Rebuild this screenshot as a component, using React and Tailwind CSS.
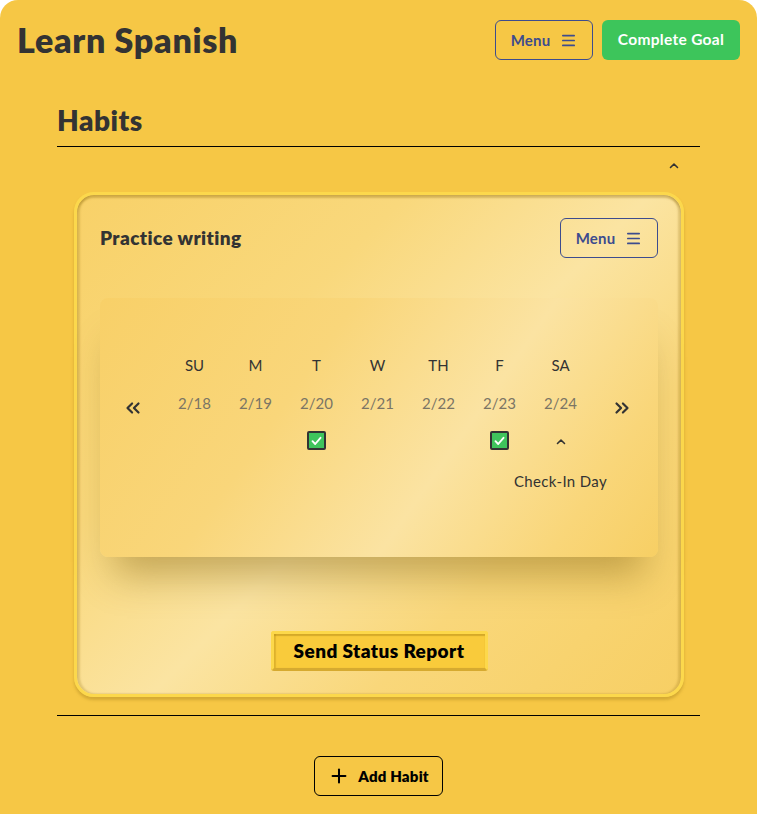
import { ChevronsLeft, ChevronsRight, Menu, Plus } from 'lucide-react';

const DAYS = [
  { label: 'SU', date: '2/18' },
  { label: 'M', date: '2/19' },
  { label: 'T', date: '2/20', done: true },
  { label: 'W', date: '2/21' },
  { label: 'TH', date: '2/22' },
  { label: 'F', date: '2/23', done: true },
  { label: 'SA', date: '2/24', checkIn: true },
];

function Caret({ className = '' }) {
  return (
    <svg width="10" height="7" viewBox="0 0 10 7" className={className}>
      <path d="M1.5 5.5 L5 2 L8.5 5.5" fill="none" stroke="#333" strokeWidth="1.6" strokeLinecap="round" strokeLinejoin="round" />
    </svg>
  );
}

function CheckBox() {
  return (
    <div className="flex h-[19px] w-[19px] items-center justify-center rounded-[2px] border-2 border-[#333] bg-[#3fc45c]">
      <svg width="11" height="10" viewBox="0 0 11 10">
        <path d="M1.5 5.2 L4.2 8 L9.5 1.8" fill="none" stroke="#fff" strokeWidth="1.9" strokeLinecap="round" strokeLinejoin="round" />
      </svg>
    </div>
  );
}

function MenuButton() {
  return (
    <button className="flex h-[40px] w-[98px] items-center justify-center gap-[10px] rounded-[6px] border border-[#3d4c8e] text-[15px] font-bold tracking-[0.2px] text-[#3d4c8e]">
      Menu <Menu size={17} strokeWidth={2.4} />
    </button>
  );
}

export default function App() {
  return (
    <div className="min-h-[814px] bg-white font-['Lato',sans-serif]">
      <div className="min-h-[814px] rounded-t-[18px] bg-[#f6c745] pb-[18px]">
        <header className="flex items-center justify-between pl-[17px] pr-[17px] pt-[20px]">
          <h1 className="text-[34px] font-extrabold leading-none tracking-[0.7px] text-[#333]">Learn Spanish</h1>
          <div className="flex gap-[9px]">
            <MenuButton />
            <button className="h-[40px] w-[138px] rounded-[6px] bg-[#3dc55b] text-[15.5px] font-bold tracking-[0.3px] text-white">Complete Goal</button>
          </div>
        </header>

        <section className="mx-[57px] mt-[43px]">
          <h2 className="border-b border-black pb-[9px] text-[28px] font-extrabold leading-[34px] tracking-[0.5px] text-[#333]">Habits</h2>
          <div className="flex h-[36px] items-center justify-end pr-[21px]">
            <Caret />
          </div>

          <article className="ml-[17px] mr-[16px] mt-[9px] rounded-[20px] border-[3px] border-[#fcd84c] bg-[linear-gradient(135deg,#f8d168_0%,#f9d87c_30%,#fbe4a2_52%,#f9d77a_72%,#f7cf64_100%)] px-[23px] pb-[23px] pt-[23px] shadow-[inset_0_3px_2px_rgba(150,115,20,0.35),inset_3px_0_2px_rgba(150,115,20,0.25),inset_-3px_0_2px_rgba(150,115,20,0.25),0_3px_3px_rgba(150,115,20,0.35)]">
            <div className="flex h-[40px] items-center justify-between">
              <h3 className="text-[19px] font-extrabold tracking-[0.4px] text-[#333]">Practice writing</h3>
              <MenuButton />
            </div>

            <div className="mt-[40px] h-[259px] rounded-[8px] bg-[linear-gradient(125deg,#f8d068_0%,#f9d67a_35%,#fbe3a2_62%,#f9d679_85%,#f7cf64_100%)] pl-[2px] pt-[57px] shadow-[0_32px_36px_-14px_rgba(130,100,20,0.45)]">
              <div className="flex items-start">
                <div className="mt-[43px] flex h-[20px] w-[62px] items-center justify-center text-[#333]">
                  <ChevronsLeft size={22} strokeWidth={2.4} />
                </div>
                {DAYS.map((day) => (
                  <div key={day.label} className="flex w-[61px] flex-col items-center">
                    <span className="h-[20px] text-[15px] leading-[20px] text-[#333]">{day.label}</span>
                    <span className="mt-[18px] h-[20px] text-[15px] leading-[20px] text-[#7b7565]">{day.date}</span>
                    <div className="mt-[18px] flex h-[19px] items-center justify-center">
                      {day.done && <CheckBox />}
                      {day.checkIn && <Caret className="mt-[2px]" />}
                    </div>
                    {day.checkIn && (
                      <span className="mt-[21px] whitespace-nowrap text-[15px] leading-[20px] tracking-[0.35px] text-[#333]">Check-In Day</span>
                    )}
                  </div>
                ))}
                <div className="mt-[43px] flex h-[20px] w-[62px] items-center justify-center text-[#333]">
                  <ChevronsRight size={22} strokeWidth={2.4} />
                </div>
              </div>
            </div>

            <div className="mt-[74px] flex justify-center">
              <button className="h-[40px] w-[217px] rounded-[3px] border-[3px] border-[#fdd84a] border-b-[#d6aa30] bg-[#f9cb3b] text-[19px] font-extrabold tracking-[0.4px] text-black shadow-[inset_0_2px_1px_rgba(170,130,20,0.45),inset_2px_0_1px_rgba(170,130,20,0.3)]">
                Send Status Report
              </button>
            </div>
          </article>

          <div className="mt-[18px] border-t border-black" />

          <div className="mt-[40px] flex justify-center">
            <button className="flex h-[40px] w-[129px] items-center justify-center gap-[8px] rounded-[6px] border border-black text-[15px] font-extrabold tracking-[0.2px] text-black">
              <Plus size={22} strokeWidth={2.2} /> Add Habit
            </button>
          </div>
        </section>
      </div>
    </div>
  );
}
